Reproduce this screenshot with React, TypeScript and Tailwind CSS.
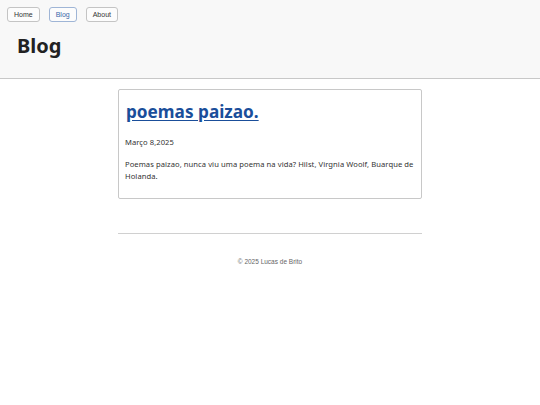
import React from 'react';

const navItems = ['Home', 'Blog', 'About'];

const App: React.FC = () => {
    const active = 'Blog';

    return (
        <div className="min-h-screen bg-white" style={{ fontFamily: '"Noto Sans", sans-serif' }}>
            {/* Header */}
            <header className="h-[79px] bg-[#f8f8f8] border-b border-[#c8c8c8]">
                <nav className="flex gap-[9px] pl-[7px] pt-[7px]">
                    {navItems.map((item) => (
                        <button
                            key={item}
                            type="button"
                            className={`h-[15px] px-[6px] rounded-[3px] border bg-[#fcfcfc] text-[7px] leading-none font-['Liberation_Sans',sans-serif] ${item === active
                                ? 'border-[#9fb5d6] text-[#3a66a8]'
                                : 'border-[#c4c4c4] text-[#333]'
                                }`}
                        >
                            {item}
                        </button>
                    ))}
                </nav>
                <h1 className="pl-[17px] pt-[9px] text-[20px] font-bold leading-[30px] text-[#222]">Blog</h1>
            </header>

            {/* Posts */}
            <main className="w-[304px] mx-auto pt-[10px]">
                <article className="border border-[#c8c8c8] rounded-[2px] px-[6px] pt-[8px] pb-[16px]">
                    <h2 className="pl-[1px] text-[17.2px] font-bold leading-[27px]">
                        <a href="#" className="text-[#1a4e9a] underline underline-offset-[2px]">poemas paizao.</a>
                    </h2>
                    <p className="mt-[11px] text-[7.6px] tracking-[0.07px] leading-[12px] text-[#333]">Março 8,2025</p>
                    <p className="mt-[10px] text-[7.6px] tracking-[0.07px] leading-[12px] text-[#333]">
                        Poemas paizao, nunca viu uma poema na vida? Hilst, Virgnia Woolf, Buarque de Holanda.
                    </p>
                </article>

                <hr className="mt-[34px] border-t border-[#d0d0d0]" />

                <footer className="pt-[23px] text-center text-[6.5px] text-[#666] font-['Liberation_Sans',sans-serif]">
                    © 2025 Lucas de Brito
                </footer>
            </main>
        </div>
    );
};

export default App;
